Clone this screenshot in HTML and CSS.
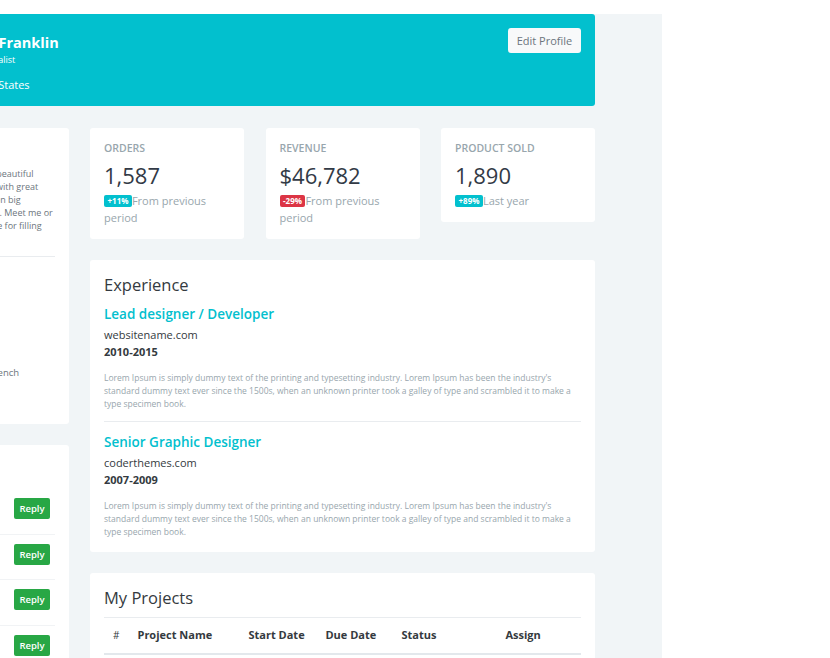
FILE: index.html
```html
<!DOCTYPE html>
<html lang="en">
<head>
    <meta charset="UTF-8">
    <meta name="viewport" content="width=device-width, initial-scale=1.0">
    <title>Profile</title>
    <link rel="stylesheet" href="styles.css">
</head>
<body>
    <div class="page">
        <div class="profile-banner">
            <div class="profile-info">
                <div class="avatar-lg"></div>
                <div class="profile-text">
                    <h4 class="profile-name">Johnathan Franklin</h4>
                    <p class="profile-role">Senior Brand Specialist</p>
                    <p class="profile-location">Boston, United States</p>
                </div>
            </div>
            <button class="btn-light">Edit Profile</button>
        </div>

        <div class="content-row">
            <div class="left-col">
                <div class="card about-card">
                    <h4 class="card-title">About Me</h4>
                    <p class="about-text">Hi, I'm a designer who loves to build beautiful
                        interfaces and rich web applications with great
                        attention to detail and have worked on big
                        international projects from my studio. Meet me or
                        send me an email or call me by phone for filling</p>
                    <hr>
                    <ul class="info-list">
                        <li><strong>Full Name :</strong> J. Franklin</li>
                        <li><strong>Mobile :</strong> (123) 123 1234</li>
                        <li><strong>Email :</strong> jon@mail.com</li>
                        <li><strong>Location :</strong> USA</li>
                        <li><strong>Languages :</strong> English, Hungarian, French</li>
                    </ul>
                </div>

                <div class="card inbox-card">
                    <h4 class="card-title">Messages</h4>
                    <ul class="inbox-list">
                        <li class="inbox-item">
                            <div class="avatar-sm"></div>
                            <div class="inbox-text">
                                <p class="inbox-name">Chadengle</p>
                                <p class="inbox-msg">Hey! there I'm available...</p>
                            </div>
                            <button class="btn-reply">Reply</button>
                        </li>
                        <li class="inbox-item">
                            <div class="avatar-sm"></div>
                            <div class="inbox-text">
                                <p class="inbox-name">Tomaslau</p>
                                <p class="inbox-msg">I've finished it! See you so...</p>
                            </div>
                            <button class="btn-reply">Reply</button>
                        </li>
                        <li class="inbox-item">
                            <div class="avatar-sm"></div>
                            <div class="inbox-text">
                                <p class="inbox-name">Stillnotdavid</p>
                                <p class="inbox-msg">This theme is awesome!</p>
                            </div>
                            <button class="btn-reply">Reply</button>
                        </li>
                        <li class="inbox-item">
                            <div class="avatar-sm"></div>
                            <div class="inbox-text">
                                <p class="inbox-name">Kurafire</p>
                                <p class="inbox-msg">Nice to meet you</p>
                            </div>
                            <button class="btn-reply">Reply</button>
                        </li>
                    </ul>
                </div>
            </div>

            <div class="right-col">
                <div class="stats-row">
                    <div class="card stat-card">
                        <h6 class="stat-label">Orders</h6>
                        <h3 class="stat-value">1,587</h3>
                        <p class="stat-note"><span class="badge badge-info">+11%</span>From previous period</p>
                    </div>
                    <div class="card stat-card">
                        <h6 class="stat-label">Revenue</h6>
                        <h3 class="stat-value">$46,782</h3>
                        <p class="stat-note"><span class="badge badge-danger">-29%</span>From previous period</p>
                    </div>
                    <div class="card stat-card">
                        <h6 class="stat-label">Product Sold</h6>
                        <h3 class="stat-value">1,890</h3>
                        <p class="stat-note"><span class="badge badge-info">+89%</span>Last year</p>
                    </div>
                </div>

                <div class="card exp-card">
                    <h4 class="card-title">Experience</h4>
                    <div class="exp-item">
                        <h5 class="exp-title">Lead designer / Developer</h5>
                        <p class="exp-company">websitename.com</p>
                        <p class="exp-years">2010-2015</p>
                        <p class="exp-desc">Lorem Ipsum is simply dummy text of the printing and typesetting industry. Lorem Ipsum has been the industry's standard dummy text ever since the 1500s, when an unknown printer took a galley of type and scrambled it to make a type specimen book.</p>
                    </div>
                    <hr>
                    <div class="exp-item">
                        <h5 class="exp-title">Senior Graphic Designer</h5>
                        <p class="exp-company">coderthemes.com</p>
                        <p class="exp-years">2007-2009</p>
                        <p class="exp-desc">Lorem Ipsum is simply dummy text of the printing and typesetting industry. Lorem Ipsum has been the industry's standard dummy text ever since the 1500s, when an unknown printer took a galley of type and scrambled it to make a type specimen book.</p>
                    </div>
                </div>

                <div class="card">
                    <h4 class="card-title">My Projects</h4>
                    <table class="project-table">
                        <thead>
                            <tr>
                                <th class="col-num">#</th>
                                <th class="col-name">Project Name</th>
                                <th class="col-start">Start Date</th>
                                <th class="col-due">Due Date</th>
                                <th class="col-status">Status</th>
                                <th>Assign</th>
                            </tr>
                        </thead>
                    </table>
                </div>
            </div>
        </div>
    </div>
</body>
</html>
```

FILE: styles.css
```css
* {
    box-sizing: border-box;
    margin: 0;
    padding: 0;
    font-family: 'Segoe UI', 'Open Sans', sans-serif;
}

body {
    background-color: #fff;
    color: #6c757d;
}

.page {
    background-color: #f1f5f7;
    width: 854px;
    margin: 14px 0 0 -192px;
    padding: 0 67px 40px 21px;
}

/* banner */
.profile-banner {
    background-color: #02c0ce;
    border-radius: 3px;
    height: 92px;
    padding: 14px 14px 0 14px;
    display: flex;
    justify-content: space-between;
    align-items: flex-start;
}

.profile-info {
    display: flex;
    gap: 12px;
}

.avatar-lg {
    width: 64px;
    height: 64px;
    border-radius: 50%;
    background: rgba(255,255,255,0.3);
}

.profile-text {
    color: #fff;
    padding-top: 5px;
}

.profile-name {
    font-size: 14.5px;
    font-weight: 700;
    line-height: 20px;
}

.profile-role {
    font-size: 9px;
    line-height: 12px;
    margin-top: 1px;
}

.profile-location {
    font-size: 11px;
    line-height: 16px;
    margin-top: 11px;
}

.btn-light {
    background-color: #f8f9fa;
    color: #6c757d;
    border: none;
    border-radius: 3px;
    width: 73px;
    height: 25px;
    font-size: 11px;
}

/* columns */
.content-row {
    display: flex;
    gap: 21px;
    margin-top: 22px;
}

.left-col {
    width: 240px;
    flex-shrink: 0;
}

.right-col {
    width: 505px;
}

.card {
    background: #fff;
    border-radius: 3px;
    padding: 14px 14px 12px;
    margin-bottom: 21px;
}

.card-title {
    color: #343a40;
    font-size: 16.5px;
    font-weight: 500;
    line-height: 22px;
}

hr {
    border: none;
    border-top: 1px solid #e9ecef;
}

/* about */
.about-card {
    height: 296px;
}

.about-text {
    font-size: 9px;
    line-height: 13px;
    color: #6c757d;
    margin-top: 2.5px;
}

.about-card hr {
    margin: 24px 0 17.5px;
}

.info-list {
    list-style: none;
    font-size: 9.5px;
    line-height: 13px;
}

.info-list li {
    margin-bottom: 10px;
}

.info-list strong {
    color: #343a40;
}

/* inbox */
.inbox-card {
    padding-bottom: 0;
}

.inbox-card .card-title {
    margin-bottom: 8px;
}

.inbox-list {
    list-style: none;
}

.inbox-item {
    display: flex;
    align-items: flex-start;
    padding: 8px 5px 8px 0;
    border-bottom: 1px solid #f1f3f5;
    height: 45.5px;
}

.avatar-sm {
    width: 29px;
    height: 29px;
    border-radius: 50%;
    background: #dee2e6;
    margin-right: 10px;
}

.inbox-text {
    width: 105px;
    overflow: hidden;
    white-space: nowrap;
}

.inbox-name {
    font-size: 10px;
    color: #343a40;
    font-weight: 600;
    line-height: 14px;
}

.inbox-msg {
    font-size: 9px;
    line-height: 13px;
    overflow: hidden;
    text-overflow: ellipsis;
}

.btn-reply {
    margin-left: auto;
    margin-top: 1px;
    background-color: #28a745;
    color: #fff;
    border: none;
    border-radius: 2px;
    width: 36px;
    height: 21px;
    font-size: 9.5px;
    font-weight: 600;
}

/* stats */
.stats-row {
    display: grid;
    grid-template-columns: repeat(3, 1fr);
    gap: 21.5px;
    align-items: start;
    margin-bottom: 21px;
}

.stat-card {
    margin-bottom: 0;
    padding: 13px 14px 12.5px;
}

.stat-label {
    font-size: 10.5px;
    line-height: 14px;
    font-weight: 600;
    color: #98a6ad;
    text-transform: uppercase;
}

.stat-value {
    font-size: 22px;
    line-height: 28px;
    font-weight: 400;
    color: #323a46;
    margin-top: 6px;
}

.stat-note {
    font-size: 11px;
    line-height: 17px;
    color: #98a6ad;
    margin-top: 3px;
}

.badge {
    display: inline-block;
    color: #fff;
    font-size: 8px;
    font-weight: 700;
    line-height: 12px;
    padding: 0 3.5px;
    border-radius: 2px;
    vertical-align: 1px;
}

.badge-info {
    background-color: #02c0ce;
}

.badge-danger {
    background-color: #dc3545;
}

/* experience */
.exp-card {
    padding-bottom: 13.5px;
}

.exp-item {
    padding-top: 9px;
}

.exp-title {
    color: #02c0ce;
    font-size: 13.5px;
    font-weight: 600;
    line-height: 18px;
}

.exp-company {
    font-size: 11px;
    line-height: 17px;
    color: #343a40;
    margin-top: 3.5px;
}

.exp-years {
    font-size: 11px;
    line-height: 17px;
    color: #343a40;
    font-weight: 700;
}

.exp-desc {
    font-size: 8.5px;
    line-height: 13px;
    color: #98a6ad;
    margin-top: 11px;
}

.exp-card hr {
    margin: 10.5px 0 2px;
}

/* projects */
.project-table {
    width: 100%;
    border-collapse: collapse;
    margin-top: 8px;
    border-top: 1px solid #e9ecef;
}

.project-table th {
    text-align: left;
    font-size: 11px;
    line-height: 16px;
    color: #343a40;
    font-weight: 700;
    padding: 9.5px 9px;
    border-bottom: 2px solid #e3e8ec;
}

.project-table .col-num {
    width: 24px;
    font-weight: 400;
    font-size: 10px;
}

.project-table .col-name {
    width: 111px;
}

.project-table .col-start {
    width: 77px;
}

.project-table .col-due {
    width: 76px;
}

.project-table .col-status {
    width: 104px;
}
```
